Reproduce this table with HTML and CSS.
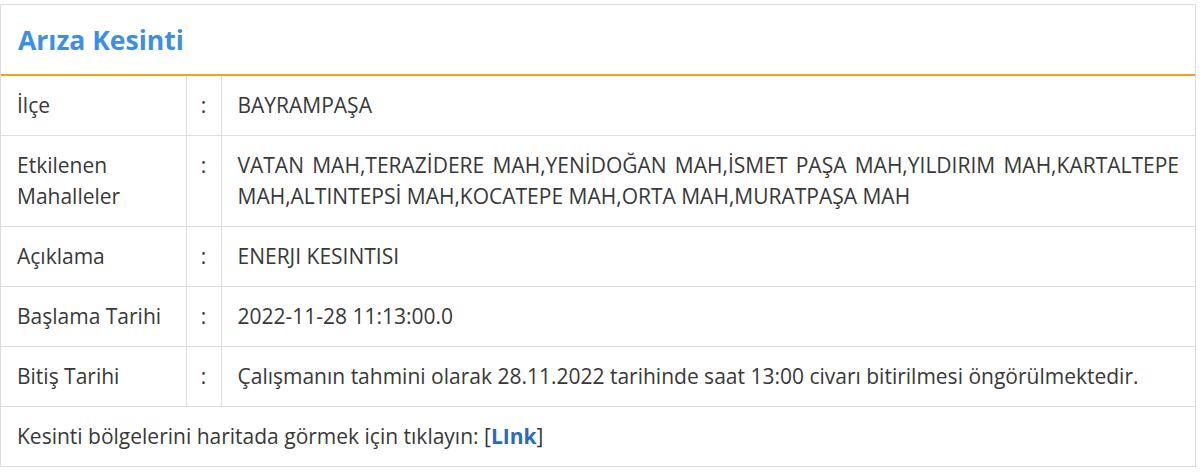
FILE: index.html
```html
<!DOCTYPE html>
<html lang="tr">
<head>
    <meta charset="UTF-8">
    <meta name="viewport" content="width=device-width, initial-scale=1.0">
    <title>Arıza Kesinti</title>
    <link rel="stylesheet" href="styles.css">
</head>
<body>

    <div class="panel">
        <div class="panel-head">
            <h3>Arıza Kesinti</h3>
        </div>

        <table class="info">
            <colgroup>
                <col class="col-label">
                <col class="col-sep">
                <col>
            </colgroup>
            <tr>
                <td>İlçe</td>
                <td class="sep">:</td>
                <td class="value">BAYRAMPAŞA</td>
            </tr>
            <tr>
                <td>Etkilenen Mahalleler</td>
                <td class="sep">:</td>
                <td class="value">VATAN MAH,TERAZİDERE MAH,YENİDOĞAN MAH,İSMET PAŞA MAH,YILDIRIM MAH,KARTALTEPE MAH,ALTINTEPSİ MAH,KOCATEPE MAH,ORTA MAH,MURATPAŞA MAH</td>
            </tr>
            <tr>
                <td>Açıklama</td>
                <td class="sep">:</td>
                <td class="value">ENERJI KESINTISI</td>
            </tr>
            <tr>
                <td>Başlama Tarihi</td>
                <td class="sep">:</td>
                <td class="value">2022-11-28 11:13:00.0</td>
            </tr>
            <tr>
                <td>Bitiş Tarihi</td>
                <td class="sep">:</td>
                <td class="value">Çalışmanın tahmini olarak 28.11.2022 tarihinde saat 13:00 civarı bitirilmesi öngörülmektedir.</td>
            </tr>
            <tr>
                <td class="footer" colspan="3">Kesinti bölgelerini haritada görmek için tıklayın: [<a href="#">LInk</a>]</td>
            </tr>
        </table>
    </div>

</body>
</html>
```

FILE: styles.css
```css
body {
    font-family: "Open Sans", Arial, sans-serif;
    margin: 0;
    padding: 4px 4px 0 0;
    background-color: #fff;
    color: #383838;
}
.panel {
    border: 1px solid #dcdcdc;
    width: 1196px;
    box-sizing: border-box;
}
.panel-head {
    height: 69px;
    display: flex;
    align-items: center;
    padding: 0 17px;
    border-bottom: 2px solid #f7a21b;
}
.panel-head h3 {
    margin: 0;
    font-size: 26.5px;
    font-weight: bold;
    color: #3d8fe3;
}
.info {
    width: 100%;
    table-layout: fixed;
    border-collapse: collapse;
    font-size: 21px;
    line-height: 31px;
}
.col-label {
    width: 185px;
}
.col-sep {
    width: 35px;
}
.info td {
    border: 1px solid #dedede;
    padding: 14px 16px;
    vertical-align: top;
}
.info tr:first-child td {
    border-top: none;
}
.info tr:last-child td {
    border-bottom: none;
}
.info td:first-child {
    border-left: none;
}
.info td:last-child {
    border-right: none;
}
.info td.sep {
    padding: 14px 0;
    text-align: center;
}
.value {
    text-align: justify;
}
.footer a {
    color: #2a6cb8;
    font-weight: bold;
    text-decoration: none;
}
```
